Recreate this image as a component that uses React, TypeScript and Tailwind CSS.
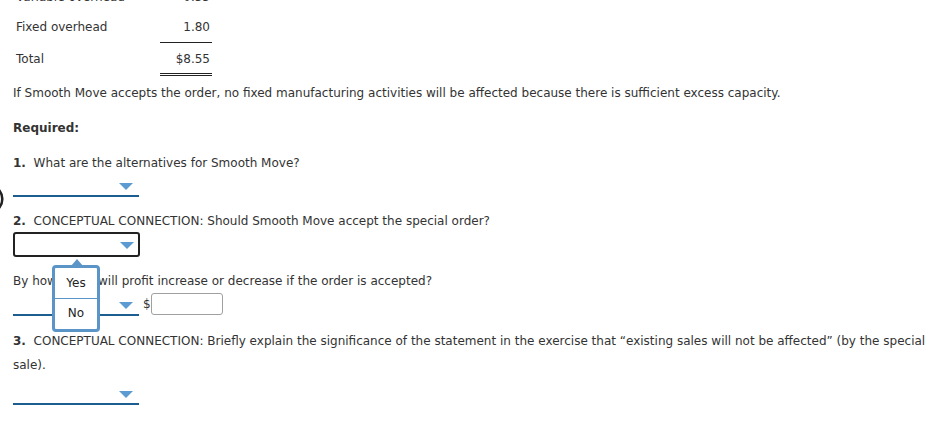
import React from 'react'

function Caret({ className = '' }: { className?: string }) {
  return (
    <svg width="14" height="7" viewBox="0 0 14 7" className={className}>
      <path d="M0 0 H14 L7 7 Z" fill="#5b9bd1" />
    </svg>
  )
}

function LineSelect() {
  return (
    <div className="relative h-[24px] w-[126px] border-b-2 border-[#1d5e91]">
      <Caret className="absolute right-[6px] top-[10px]" />
    </div>
  )
}

export default function App() {
  return (
    <main
      className="relative h-[425px] w-[937px] overflow-hidden bg-white pl-[13px] text-[12px] leading-[18px] text-[#333]"
      style={{ fontFamily: '"DejaVu Sans", Verdana, sans-serif' }}
    >
      {/* cost table */}
      <div className="-mt-[12px] w-[200px]">
        <div className="flex h-[30px]">
          <span className="w-[147px] pl-[3px]">Variable overhead</span>
          <span className="w-[52px] pr-[2px] text-right">0.35</span>
        </div>
        <div className="flex">
          <span className="w-[147px] pl-[3px]">Fixed overhead</span>
          <span className="w-[52px] border-b border-[#222] pb-[6px] pr-[2px] text-right">1.80</span>
        </div>
        <div className="flex">
          <span className="w-[147px] pl-[3px] pt-[7px]">Total</span>
          <span className="w-[52px] border-b-[3px] border-double border-[#222] pb-[5px] pr-[2px] pt-[7px] text-right">$8.55</span>
        </div>
      </div>

      <p className="mt-[8px]">
        If Smooth Move accepts the order, no fixed manufacturing activities will be affected because there is sufficient excess capacity.
      </p>

      <p className="mt-[17px] font-bold">Required:</p>

      <p className="mt-[17px]">
        <span className="font-bold">1.</span>&nbsp;&nbsp;What are the alternatives for Smooth Move?
      </p>
      <div className="mt-[1px]">
        <LineSelect />
      </div>

      <p className="mt-[15px]">
        <span className="font-bold">2.</span>&nbsp;&nbsp;CONCEPTUAL CONNECTION: Should Smooth Move accept the special order?
      </p>
      <div className="relative mt-[2px] h-[25px] w-[127px] rounded-[3px] border-2 border-[#222]">
        <Caret className="absolute right-[4px] top-[8px]" />
      </div>

      <p className="mt-[15px]">
        By how much will profit increase or decrease if the order is accepted?
      </p>
      <div className="mt-[2px] flex items-end">
        <LineSelect />
        <span className="mb-[3px] ml-[4px]">$</span>
        <div className="mb-[1px] h-[22px] w-[72px] rounded-[3px] border border-[#a0a0a0]" />
      </div>

      <p className="mt-[13px] leading-[24px]">
        <span className="font-bold">3.</span>&nbsp;&nbsp;CONCEPTUAL CONNECTION: Briefly explain the significance of the statement in the exercise that “existing sales will not be affected” (by the special sale).
      </p>
      <div className="mt-[4px]">
        <LineSelect />
      </div>

      {/* open dropdown menu */}
      <div className="absolute left-[52px] top-[265px] w-[48px] rounded-[4px] border-[3px] border-[#5b95c8] bg-white text-center text-[#222]">
        <svg width="12" height="7" viewBox="0 0 12 7" className="absolute -top-[9px] left-[16px]">
          <path d="M0 7 L6 0 L12 7 Z" fill="#5b95c8" />
        </svg>
        <div className="border-b border-[#5b95c8] pb-[6px] pt-[6px]">Yes</div>
        <div className="pb-[7px] pt-[5px]">No</div>
      </div>

      {/* partial circle at the left edge */}
      <svg width="8" height="30" viewBox="0 0 8 30" className="absolute left-0 top-[184px]">
        <path d="M-8 1.5 A 14 14 0 0 1 -8 28.5" fill="none" stroke="#222" strokeWidth="2.6" />
      </svg>
    </main>
  )
}
